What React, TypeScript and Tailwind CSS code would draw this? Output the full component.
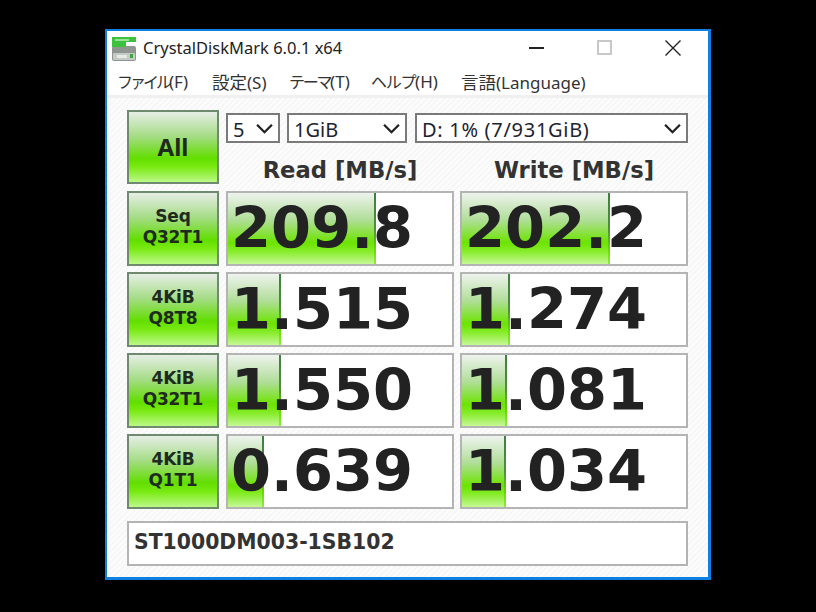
const sans = "font-['Noto_Sans','Noto_Sans_CJK_JP',sans-serif]";

const menus = [
  { label: 'ファイル', key: '(F)', className: 'w-[95px]', labelClass: 'text-[16px] tracking-[-3px]' },
  { label: '設定', key: '(S)', className: 'w-[77px]', labelClass: 'text-[17.5px]' },
  { label: 'テーマ', key: '(T)', className: 'w-[82px]', labelClass: 'text-[16px] tracking-[-2.3px]' },
  { label: 'ヘルプ', key: '(H)', className: 'w-[90px]', labelClass: 'text-[16px] tracking-[-1.3px]' },
  { label: '言語', key: '(Language)', className: 'w-[140px]', labelClass: 'text-[17.5px]' },
];

const rows = [
  { top: 'Seq', bottom: 'Q32T1', read: '209.8', readBar: 66, write: '202.2', writeBar: 66 },
  { top: '4KiB', bottom: 'Q8T8', read: '1.515', readBar: 23.5, write: '1.274', writeBar: 21.5 },
  { top: '4KiB', bottom: 'Q32T1', read: '1.550', readBar: 23.5, write: '1.081', writeBar: 20 },
  { top: '4KiB', bottom: 'Q1T1', read: '0.639', readBar: 16, write: '1.034', writeBar: 19.5 },
];

function Chevron({ className }: { className: string }) {
  return (
    <svg viewBox="0 0 16 10" className={className} fill="none" stroke="#222" strokeWidth="2.2">
      <path d="M1 1.5l7 7 7-7" />
    </svg>
  );
}

function Select({ value, className }: { value: string; className: string }) {
  return (
    <div className={`flex h-[30px] items-center justify-between border-2 border-[#7a7a7a] bg-white pl-[5px] pr-[5px] text-[20px] text-[#1c2430] ${className}`}>
      <span className="pt-[4px]">{value}</span>
      <Chevron className="h-[11px] w-[17px]" />
    </div>
  );
}

function DiskIcon() {
  return (
    <svg viewBox="0 0 26 26" className="h-[26px] w-[26px]">
      <rect x="1" y="10" width="24" height="15" rx="2" fill="#8f9690" />
      <rect x="2" y="17" width="22" height="7" rx="1" fill="#c4cac5" />
      <rect x="6" y="19" width="10" height="3" fill="#e7ebe8" />
      <rect x="19" y="18" width="3" height="4" fill="#3fa53f" />
      <path d="M1 1h24v5H15v5H1z" fill="#3cc23c" />
      <rect x="4" y="3" width="14" height="2" fill="#9be39b" />
    </svg>
  );
}

function GreenButton({ className, children }: { className: string; children: React.ReactNode }) {
  return (
    <div className={`flex w-[92px] flex-col items-center justify-center border-2 border-[#6f8a6f] bg-[linear-gradient(to_bottom,#e6eee6_0%,#a4dc84_35%,#62de00_66%,#78ea10_78%,#bcf888_100%)] font-bold text-[#1e2a1e] ${className}`}>
      {children}
    </div>
  );
}

function Score({ value, bar }: { value: string; bar: number }) {
  return (
    <div className="relative h-full w-[228px] overflow-hidden border-2 border-[#b4b4b4] bg-white">
      <div
        className="absolute inset-y-0 left-0 bg-[linear-gradient(to_bottom,#eef3ee_0%,#b0de98_38%,#6ce400_70%,#86ec2a_82%,#c6f896_100%)]"
        style={{ width: `${bar}%` }}
      >
        <div className="absolute inset-y-0 right-0 w-[2px] bg-[linear-gradient(to_bottom,#3f7f3f_0%,#4f8f3a_50%,#66dc00_80%,#8cec40_100%)]" />
      </div>
      <div className="relative pr-[39px] text-right font-['DejaVu_Sans',sans-serif] text-[57.5px] font-bold leading-[71px] text-[#222222]">
        {value}
      </div>
    </div>
  );
}

export default function App() {
  return (
    <div className={`h-[612px] w-[816px] bg-black pl-[105px] pt-[29px] ${sans}`}>
      <div className="flex h-[551px] w-[606px] flex-col border-[3px] border-l-[2px] border-t-[2px] border-[#0f7fe0] bg-white">
        <div className="flex h-[35px] items-center pl-[4px]">
          <DiskIcon />
          <span className="ml-[6px] text-[16.5px] text-[#222]">CrystalDiskMark 6.0.1 x64</span>
          <div className="ml-auto flex items-center gap-[53px] pb-[2px] pr-[27px]">
            <div className="h-[2px] w-[15px] bg-[#222]" />
            <div className="h-[15px] w-[15px] border-2 border-[#c8c8c8]" />
            <svg viewBox="0 0 16 16" className="h-[16px] w-[16px]" stroke="#222" strokeWidth="1.4">
              <path d="M0.5 0.5l15 15M15.5 0.5l-15 15" />
            </svg>
          </div>
        </div>
        <div className="flex h-[29px] items-center pl-[10px] pt-[3px] text-[17px] text-[#333]">
          {menus.map((m) => (
            <span key={m.key} className={m.className}>
              <span className={m.labelClass}>{m.label}</span>
              {m.key}
            </span>
          ))}
        </div>
        <div className="h-[3px] bg-[#f0f0f0]" />
        <div className="flex flex-1 flex-col bg-[repeating-linear-gradient(135deg,#fcfcfc_0,#fcfcfc_2px,#f7f7f7_2px,#f7f7f7_4px)] pl-[20px] pt-[12px]">
          <div className="flex h-[74px] gap-[7px]">
            <GreenButton className="h-[74px] text-[24px]">All</GreenButton>
            <div className="flex flex-col">
              <div className="flex pt-[3px]">
                <Select value="5" className="w-[54px]" />
                <Select value="1GiB" className="ml-[7px] w-[120px]" />
                <Select value="D: 1% (7/931GiB)" className="ml-[8px] w-[273px] tracking-[0.7px]" />
              </div>
              <div className="mt-[13px] flex gap-[6px] text-center font-['DejaVu_Sans',sans-serif] text-[22.7px] font-bold leading-[28px] text-[#333333]">
                <div className="w-[228px]">Read [MB/s]</div>
                <div className="w-[228px]">Write [MB/s]</div>
              </div>
            </div>
          </div>
          <div className="mt-[7px] flex flex-col gap-[6px]">
            {rows.map((r) => (
              <div key={r.read} className="flex h-[75px] gap-[7px]">
                <GreenButton className="h-[75px] pb-[4px] font-['DejaVu_Sans',sans-serif] text-[17px] leading-[21px] tracking-[-0.2px]">
                  <span>{r.top}</span>
                  <span>{r.bottom}</span>
                </GreenButton>
                <div className="flex gap-[6px]">
                  <Score value={r.read} bar={r.readBar} />
                  <Score value={r.write} bar={r.writeBar} />
                </div>
              </div>
            ))}
          </div>
          <div className="mt-[12px] flex h-[45px] w-[561px] items-center border-2 border-[#b4b4b4] bg-white pb-[3px] pl-[5px] font-['DejaVu_Sans',sans-serif] text-[20.4px] font-bold text-[#333]">
            ST1000DM003-1SB102
          </div>
        </div>
      </div>
    </div>
  );
}
